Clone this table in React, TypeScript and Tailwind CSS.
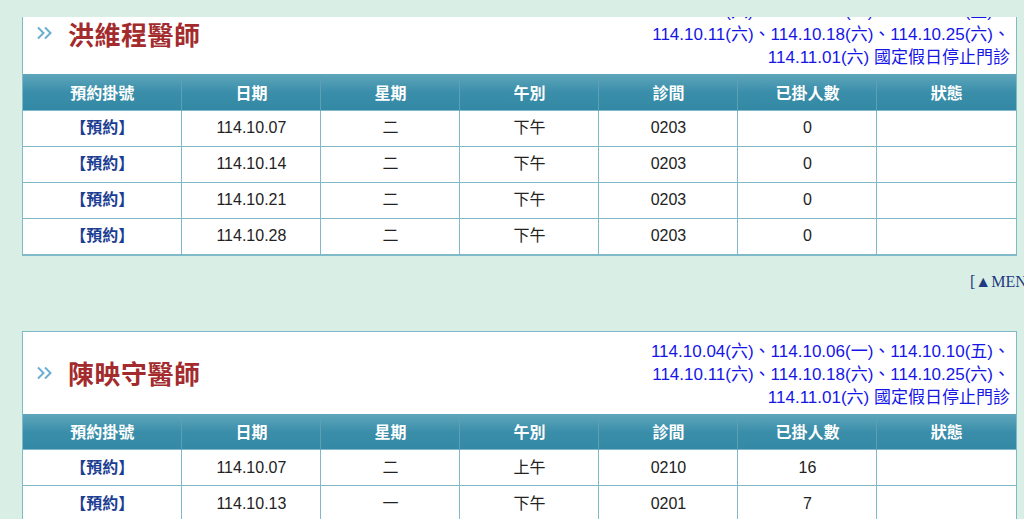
import React from 'react'

type Row = { date: string; week: string; period: string; room: string; count: string }

const doctors: { name: string; rows: Row[] }[] = [
    {
        name: '洪維程醫師',
        rows: [
            { date: '114.10.07', week: '二', period: '下午', room: '0203', count: '0' },
            { date: '114.10.14', week: '二', period: '下午', room: '0203', count: '0' },
            { date: '114.10.21', week: '二', period: '下午', room: '0203', count: '0' },
            { date: '114.10.28', week: '二', period: '下午', room: '0203', count: '0' },
        ],
    },
    {
        name: '陳映守醫師',
        rows: [
            { date: '114.10.07', week: '二', period: '上午', room: '0210', count: '16' },
            { date: '114.10.13', week: '一', period: '下午', room: '0201', count: '7' },
        ],
    },
]

const notice = [
    '114.10.04(六)、114.10.06(一)、114.10.10(五)、',
    '114.10.11(六)、114.10.18(六)、114.10.25(六)、',
    '114.11.01(六) 國定假日停止門診',
]

const heads = ['預約掛號', '日期', '星期', '午別', '診間', '已掛人數', '狀態']

const cjk = { fontFamily: '"Liberation Sans", "Noto Sans CJK TC", sans-serif' }

function Arrows() {
    return (
        <svg width="17" height="14" viewBox="0 0 17 14" className="shrink-0">
            <path d="M2 1.5 L7.5 7 L2 12.5" fill="none" stroke="#6aaed2" strokeWidth="2" />
            <path d="M9 1.5 L14.5 7 L9 12.5" fill="none" stroke="#6aaed2" strokeWidth="2" />
        </svg>
    )
}

function DoctorCard({ name, rows }: { name: string; rows: Row[] }) {
    return (
        <div className="bg-white border border-[#80b9c9]">
            {/* header: name + holiday notice */}
            <div className="flex justify-between h-[82px]">
                <div className="flex items-center gap-[15px] pl-[13px]">
                    <Arrows />
                    <span
                        className="text-[26px] font-bold text-[#a32b2d] tracking-[0.5px]"
                        style={{ fontFamily: '"Noto Sans CJK TC", sans-serif' }}
                    >
                        {name}
                    </span>
                </div>
                <div className="pt-[8px] pr-[6px] text-right text-[17px] leading-[23px] text-[#1515e8]" style={cjk}>
                    {notice.map((line) => (
                        <div key={line} className="whitespace-nowrap">{line}</div>
                    ))}
                </div>
            </div>

            <table className="w-full table-fixed border-collapse" style={cjk}>
                <colgroup>
                    <col className="w-[16%]" />
                    {heads.slice(1).map((h) => (
                        <col key={h} className="w-[14%]" />
                    ))}
                </colgroup>
                <thead>
                    <tr className="h-[36px] bg-gradient-to-b from-[#5ea6bb] via-[#3a8eaa] to-[#3389a5]">
                        {heads.map((h) => (
                            <th
                                key={h}
                                className="border-x border-[#5d9fb5] first:border-l-0 last:border-r-0 text-white text-[16px] font-bold"
                                style={{ fontFamily: '"Noto Sans CJK TC", sans-serif' }}
                            >
                                {h}
                            </th>
                        ))}
                    </tr>
                </thead>
                <tbody>
                    {rows.map((r, i) => (
                        <tr key={i} className="h-[36px] text-[16px] text-[#222]">
                            <td className="border border-[#80b9c9] border-l-0 text-center">
                                <span className="text-[#1c3e92] font-bold">【預約】</span>
                            </td>
                            <td className="border border-[#80b9c9] text-center">{r.date}</td>
                            <td className="border border-[#80b9c9] text-center">{r.week}</td>
                            <td className="border border-[#80b9c9] text-center">{r.period}</td>
                            <td className="border border-[#80b9c9] text-center">{r.room}</td>
                            <td className="border border-[#80b9c9] text-center">{r.count}</td>
                            <td className="border border-[#80b9c9] border-r-0 text-center"></td>
                        </tr>
                    ))}
                </tbody>
            </table>
        </div>
    )
}

export default function App() {
    return (
        <div className="w-[1024px] h-[519px] overflow-hidden bg-[#d9efe5] relative">
            {/* top strip covering scrolled content */}
            <div className="absolute top-0 left-0 right-0 h-[17px] bg-[#d9efe5] z-10" />

            <div className="-mt-[9px] pl-[22px] pr-[7px]">
                <DoctorCard {...doctors[0]} />

                <div className="h-[75px] flex items-center">
                    <span
                        className="ml-[948px] whitespace-nowrap text-[16px] text-[#1e3a80] -mt-[22px]"
                        style={{ fontFamily: '"Liberation Serif", "Noto Sans CJK TC", serif' }}
                    >
                        [▲MENU]
                    </span>
                </div>

                <DoctorCard {...doctors[1]} />
            </div>
        </div>
    )
}
